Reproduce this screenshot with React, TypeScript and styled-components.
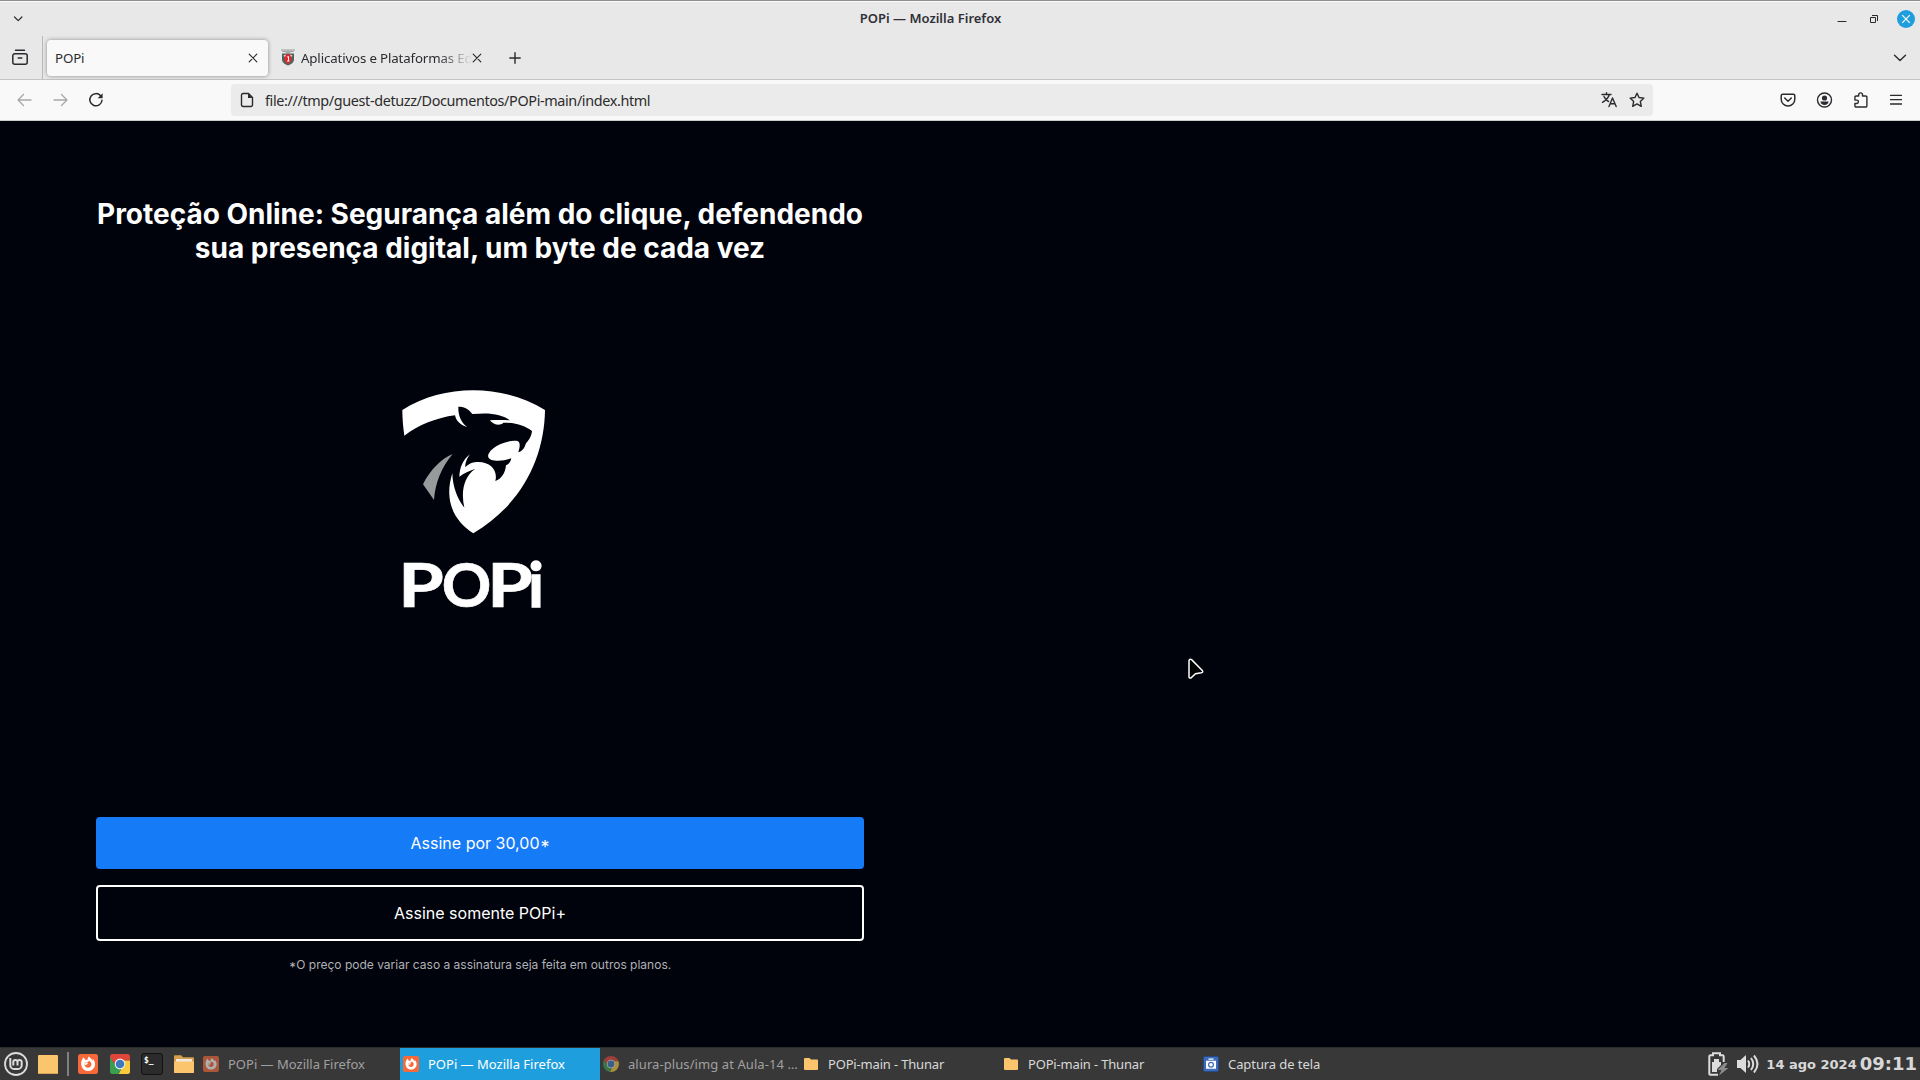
import React from "react";
import styled, { createGlobalStyle } from "styled-components";

const UI_FONT = '"Noto Sans", "Open Sans", sans-serif';

const GlobalStyle = createGlobalStyle`
  * { box-sizing: border-box; }
  html, body { margin: 0; padding: 0; background: #00030c; overflow: hidden; }
`;

const Desktop = styled.div`
  display: flex;
  flex-direction: column;
  width: 1920px;
  height: 1080px;
  font-family: ${UI_FONT};
  color: #2b2b2f;
`;

const Icon = styled.svg`
  display: block;
  flex: none;
  overflow: visible;
`;

const Label = styled.span<{ $spacing?: number }>`
  white-space: nowrap;
  letter-spacing: ${(p) => p.$spacing ?? 0}px;
`;

/* ---------- Window frame ---------- */

const TitleBar = styled.header`
  display: grid;
  grid-template-columns: 1fr auto 1fr;
  align-items: center;
  height: 36px;
  padding: 2px 5px 2px 12px;
  border-top: 1px solid #8e8e92;
  box-shadow: inset 0 1px 0 #fafafa;
  background: #e8e8e8;
`;

const WindowTitle = styled.h1`
  margin: 0 0 0 -66px;
  padding-bottom: 1px;
  font-size: 13px;
  line-height: 18px;
  font-weight: 600;
  color: #303036;
`;

const WindowButtons = styled.div`
  display: flex;
  justify-content: flex-end;
  align-items: center;
  gap: 14px;
`;

const Minimize = styled.div`
  margin-right: 4px;
`;

const TabStrip = styled.div`
  display: flex;
  align-items: center;
  height: 44px;
  border-bottom: 1px solid #c4c4c4;
  background: #e8e8e8;
`;

const RecentTabs = styled.div`
  display: flex;
  flex: none;
  align-items: center;
  align-self: stretch;
  width: 43px;
  padding-left: 12px;
  border-right: 1px solid #b8b8b8;
`;

const Tab = styled.div<{ $active?: boolean; $width: number }>`
  display: flex;
  flex: none;
  align-items: center;
  width: ${(p) => p.$width}px;
  height: 36px;
  margin-left: 4px;
  padding: 0 10px 0 ${(p) => (p.$active ? 6 : 9)}px;
  border-radius: 4px;
  font-size: 13.3px;
  background: ${(p) => (p.$active ? "#f9f9f9" : "transparent")};
  box-shadow: ${(p) => (p.$active ? "0 0 4px rgba(0, 0, 0, 0.4)" : "none")};
`;

const TabTitle = styled.span<{ $fade?: boolean }>`
  flex: 1;
  min-width: 0;
  margin-left: ${(p) => (p.$fade ? 6 : 2)}px;
  overflow: hidden;
  white-space: nowrap;
  letter-spacing: -0.15px;
  mask-image: ${(p) => (p.$fade ? "linear-gradient(to left, transparent, #000 34px)" : "none")};
`;

const NewTab = styled.div`
  margin-left: 17px;
  flex: 1;
`;

const AllTabs = styled.div`
  margin-right: 13px;
`;

const NavBar = styled.nav`
  display: flex;
  align-items: center;
  height: 41px;
  padding: 0 16px;
  border-bottom: 1px solid #cccccc;
  background: #f9f9f9;
`;

const NavButtons = styled.div`
  display: flex;
  flex: none;
  gap: 20px;
  width: 215px;
  padding-left: 1px;
`;

const AddressBar = styled.div`
  display: flex;
  flex: none;
  align-items: center;
  width: 1422px;
  height: 32px;
  padding: 0 8px 0 9px;
  border-radius: 4px;
  background: #ebebeb;
  font-size: 14.4px;
`;

const Address = styled.div`
  flex: 1;
  padding-left: 11px;
  color: #2c2c2c;
`;

const AddressActions = styled.div`
  display: flex;
  gap: 12px;
`;

const ToolbarActions = styled.div`
  display: flex;
  flex: 1;
  justify-content: flex-end;
  gap: 20px;
`;

/* ---------- Page ---------- */

const Page = styled.main`
  flex: 1;
  padding: 76px 96px 0;
  background: #00030c;
  color: #ffffff;
  font-family: Inter, sans-serif;
`;

const Column = styled.section`
  display: flex;
  flex-direction: column;
  width: 768px;
`;

const Headline = styled.h2`
  margin: 0 -10px;
  padding: 0 10px;
  font-size: 28px;
  line-height: 34px;
  font-weight: 700;
  letter-spacing: -0.01px;
  text-align: center;
`;

const Brand = styled.div`
  height: 437px;
  margin: 115px 0 0 294px;
`;

const PlanButton = styled.button<{ $outlined?: boolean }>`
  height: ${(p) => (p.$outlined ? 56 : 52)}px;
  margin-bottom: 16px;
  padding: 0;
  border: ${(p) => (p.$outlined ? "2px solid #ffffff" : "none")};
  border-radius: 4px;
  background: ${(p) => (p.$outlined ? "transparent" : "#167bf7")};
  color: #ffffff;
  font: 400 16px Inter, sans-serif;
`;

const Footnote = styled.p`
  margin: 0;
  font-size: 12px;
  line-height: 15px;
  text-align: center;
  color: #b0b1b4;
`;

const Asterisk = styled.span`
  display: inline-block;
  line-height: 1;
  padding: 0 0.06em;
  transform: translateY(0.2em) scale(1.12);
`;

/* ---------- Taskbar ---------- */

const Taskbar = styled.footer`
  display: flex;
  align-items: stretch;
  height: 33px;
  border-top: 1px solid #2c2c2c;
  background: #383838;
  color: #d8d8d8;
`;

const Launchers = styled.div`
  display: flex;
  flex: none;
  align-items: center;
  width: 200px;
  padding-left: 4px;
`;

const Launcher = styled.div<{ $gap: number }>`
  margin-left: ${(p) => p.$gap}px;
`;

const LauncherDivider = styled.div`
  width: 2px;
  height: 24px;
  margin-left: 9px;
  background: #808080;
`;

const TaskButton = styled.div<{ $active?: boolean; $dim?: boolean }>`
  display: flex;
  flex: none;
  align-items: center;
  gap: 9px;
  width: 200px;
  padding: 0 0 0 3px;
  background: ${(p) => (p.$active ? "#1f9ede" : "transparent")};
  color: ${(p) => (p.$active ? "#ffffff" : p.$dim ? "#a0a0a0" : "#d8d8d8")};
  font-size: 13px;

  svg { opacity: ${(p) => (p.$dim ? 0.6 : 1)}; }
`;

const Tray = styled.div`
  display: flex;
  flex: 1;
  align-items: center;
  justify-content: flex-end;
  padding-right: 3px;
  font-family: "DejaVu Sans", sans-serif;
  font-weight: 700;
`;

const TrayDate = styled.span`
  margin-left: 5px;
  font-size: 13px;
  white-space: nowrap;
`;

const TrayTime = styled.span`
  margin: 0 0 1px 3px;
  font-size: 18px;
`;

const Pointer = styled.svg`
  position: fixed;
  left: 1187px;
  top: 658px;
`;

/* ---------- Drawings ---------- */

type StrokeProps = { w: number; h: number; d: string; color?: string; weight?: number };

const Stroke = ({ w, h, d, color = "#2b2b2f", weight = 1.4 }: StrokeProps) => (
  <Icon width={w} height={h} viewBox={`0 0 ${w} ${h}`} fill="none" stroke={color} strokeWidth={weight} strokeLinecap="round" strokeLinejoin="round">
    <path d={d} />
  </Icon>
);

const CloseX = () => <Stroke w={10} h={10} d="M1.2 1.2 8.8 8.8M8.8 1.2 1.2 8.8" weight={1.2} />;

const Crest = () => (
  <Icon width="14" height="17" viewBox="0 0 14 17">
    <path d="M0 1h14M1.500 2.500h11" stroke="#999" strokeWidth="1" />
    <path d="M4 3 7 1l3 2-3 2z" fill="#aaa" />
    <path d="M1 4.500h12v6c0 3-3 5-6 6-3-1-6-3-6-6z" fill="#48685f" />
    <path d="M3.500 5.500h7v5c0 2-1.500 3.300-3.500 4.300-2-1-3.500-2.300-3.500-4.300z" fill="#e9232b" />
    <path d="M2.500 6.500 5 5.500 4 8zM11.500 6.500 9 5.500l1 2.500z" fill="#d9dfe0" />
    <path d="M6.200 8 7.500 7.500v4.500M6 12h2.500" stroke="#fff" fill="none" />
  </Icon>
);

const FirefoxIcon = ({ size }: { size: number }) => (
  <Icon width={size} height={size} viewBox="0 0 20 20">
    <rect width="20" height="20" rx="2.500" fill="#f8693a" />
    <path d="M6 3.200C3.600 5.200 3 7.800 3.200 10.500 3.600 14.300 6.500 17 10 17c4 0 7-3 7-6.800 0-2.500-1.200-4.500-2.600-5.600.4 1 .5 1.700.4 2.300C13.700 4.800 12 4.200 11 2.600c-1.200 1-1.500 2.300-1.300 3.400-.8-.3-1.400-.2-2 .1C6.600 5.300 6.200 4.400 6 3.200z" fill="#fff" />
    <path d="M7.500 8.600c1 .2 1.700.1 2.700-.7.300-.3.500-.7.300-1.100 1.800.4 3 1.800 2.900 3.600 0 1.900-1.500 3.300-3.400 3.300-2 0-3.500-1.500-3.500-3.300 0-.7.400-1.400 1-1.800z" fill="#f8693a" />
    <path d="M7 9.500c.8-.6 2-.4 3 0-.4.800-1.300 1.100-1.800 1.300-.4.500-1.200.4-1.700.2z" fill="#fff" />
  </Icon>
);

const ChromeIcon = ({ size, round }: { size: number; round?: boolean }) => (
  <Icon width={size} height={size} viewBox="0 0 20 20">
    <defs>
      <clipPath id={round ? "chromeRound" : "chromeSquare"}>
        <rect width="20" height="20" rx={round ? 10 : 2.5} />
      </clipPath>
    </defs>
    <g clipPath={`url(#${round ? "chromeRound" : "chromeSquare"})`}>
      <path d="M0 0h20v6.500H10L6 12 0 4z" fill="#e0453a" />
      <path d="M10 6.500h10V20H8.500L13 12z" fill="#f8ca3c" />
      <path d="M0 3l6 9.500 6 .5L8.500 20H0z" fill="#3a9e50" />
    </g>
    <circle cx="10" cy="10" r="5.400" fill="#f2f2f2" />
    <circle cx="10" cy="10" r="4.300" fill="#3e78bd" />
  </Icon>
);

const FolderIcon = ({ large }: { large?: boolean }) =>
  large ? (
    <Icon width="20" height="18" viewBox="0 0 20 18">
      <path d="M0 1.500C0 .7.500.3 1.200.3h6L9 2.300h10q1 0 1 1V17q0 1-1 1H1q-1 0-1-1z" fill="#d79e4d" />
      <path d="M2 4h16v3H2z" fill="#f0e8dd" />
      <path d="M0 6.500h20V17q0 1-1 1H1q-1 0-1-1z" fill="#fbc56d" />
    </Icon>
  ) : (
    <Icon width="16" height="14" viewBox="0 0 16 14">
      <path d="M1 2q0-1 1-1h4.500L8 2.500h6q1 0 1 1V12q0 1-1 1H2q-1 0-1-1z" fill="#fbc56d" />
    </Icon>
  );

const MintIcon = () => (
  <Icon width="24" height="24" viewBox="0 0 24 24" fill="none" stroke="#dcdcdc">
    <circle cx="12" cy="12" r="11" strokeWidth="1.800" />
    <path d="M6.300 6v7.200a3.800 3.800 0 0 0 3.800 3.800h3.800a3.800 3.800 0 0 0 3.800-3.800V10a2.100 2.100 0 0 0-4.200 0v3.500M13.500 10a2.100 2.100 0 0 0-4.200 0v3.500" strokeWidth="2" />
  </Icon>
);

const CameraIcon = () => (
  <Icon width="16" height="16" viewBox="0 0 16 16">
    <rect x=".5" y=".5" width="15" height="15" rx="1.500" fill="#3c6cb8" stroke="#254a85" />
    <path d="M5.500 2.500h5v1.300h-5zM3 4.800h10v8H3z" fill="#fff" />
    <circle cx="8" cy="8.800" r="2.400" fill="#fff" stroke="#3c6cb8" strokeWidth="1.200" />
  </Icon>
);

const BrandLogo = () => (
  <Icon width="170" height="240" viewBox="0 0 510 720">
    <path
      fill="#fff"
      d="M37 90C100 50 175 31 250 31s150 19 215 59c-2 140-65 280-215 370C195 425 160 365 187 280c1 42 16 78 36 103-11-48-1-93 32-116-17 5-33 13-47 23 1-27 10-50 32-67-12 17-14 27-14 39 12-13 24-16 39-16 38 0 59 26 51 57 19-6 30-25 32-47 8-4 14-10 16-21-19 7-44 10-61 4-18-7-6-27 17-41 25-14 52-18 64-14 9 6 4 21 1 33 13-4 19-14 23-27 10-12 16-20 18-37-21-15-46-25-86-25-5 6-15 7-24 5-6-3-13-7-16-12 20-2 40-1 60 0C335 102 300 97 247 102 235 85 220 80 205 80c-1 25 8 48 27 61-20-4-34-19-37-35C140 113 85 135 43 167 39 140 37 115 37 90z"
    />
    <path fill="#98999b" d="M188 222c-33 13-68 48-89 91l33 47c3-50 23-100 56-138z" />
    <g fill="#fff" stroke="#fff" strokeWidth="2" fontFamily="Lato, sans-serif" fontSize="184" fontWeight="700">
      <text transform="translate(25 680) scale(1.2 1)">P</text>
      <text x="155" y="680">O</text>
      <text transform="translate(292 680) scale(1.2 1)">P</text>
      <text x="415" y="680" strokeWidth="4">i</text>
    </g>
  </Icon>
);

const TASKS = [
  { title: "POPi — Mozilla Firefox", icon: <FirefoxIcon size={16} />, dim: true },
  { title: "POPi — Mozilla Firefox", icon: <FirefoxIcon size={16} />, active: true },
  { title: "alura-plus/img at Aula-14 …", icon: <ChromeIcon size={16} round />, dim: true, spacing: 0.08 },
  { title: "POPi-main - Thunar", icon: <FolderIcon />, spacing: -0.17 },
  { title: "POPi-main - Thunar", icon: <FolderIcon />, spacing: -0.17 },
  { title: "Captura de tela", icon: <CameraIcon />, spacing: -0.08 },
];

export default function App() {
  return (
    <Desktop>
      <GlobalStyle />
      <TitleBar>
        <Stroke w={12} h={6} d="M2.500 1 6.200 4.600 9.900 1" weight={1.2} />
        <WindowTitle>
          <Label>POPi — Mozilla Firefox</Label>
        </WindowTitle>
        <WindowButtons>
          <Minimize>
            <Stroke w={10} h={10} d="M1 7.500h8" weight={1.1} />
          </Minimize>
          <Icon width="18" height="10" viewBox="0 0 18 10" fill="none" stroke="#2b2b2f">
            <path d="M5.500 3.500h5v5h-5zM7 1.500h5.500V7" />
          </Icon>
          <Icon width="18" height="18" viewBox="0 0 18 18">
            <circle cx="9" cy="9" r="9" fill="#1f9ede" />
            <path d="m5.200 5.200 7.600 7.600m0-7.600-7.600 7.600" stroke="#fff" strokeWidth="1.200" />
          </Icon>
        </WindowButtons>
      </TitleBar>

      <TabStrip>
        <RecentTabs>
          <Stroke w={16} h={17} d="M3.500 1.200h9M2.800 4.700h10.400a2 2 0 0 1 2 2v6.600a2 2 0 0 1-2 2H2.800a2 2 0 0 1-2-2V6.700a2 2 0 0 1 2-2zM6.200 9h3.600" weight={1.5} />
        </RecentTabs>
        <Tab $active $width={221}>
          <TabTitle>POPi</TabTitle>
          <CloseX />
        </Tab>
        <Tab $width={220}>
          <Crest />
          <TabTitle $fade>Aplicativos e Plataformas Ed</TabTitle>
          <CloseX />
        </Tab>
        <NewTab>
          <Stroke w={12} h={12} d="M6 .8v10.400M.8 6h10.400" />
        </NewTab>
        <AllTabs>
          <Stroke w={14} h={8} d="M1.500 1.200 7 6.500l5.500-5.300" />
        </AllTabs>
      </TabStrip>

      <NavBar>
        <NavButtons>
          <Stroke w={16} h={14} d="M14 7H1m5.500-5.500L1 7l5.500 5.500" color="#a8a8a8" weight={1.3} />
          <Stroke w={16} h={14} d="M1 7h13M8.500 1.500 14 7l-5.500 5.500" color="#a8a8a8" weight={1.3} />
          <Icon width="14" height="14" viewBox="0 0 14 14">
            <path d="M11.600 2.800A6.100 6.100 0 1 0 13 7.300" fill="none" stroke="#2b2b2f" strokeWidth="1.500" strokeLinecap="round" />
            <path d="M13.600.3v5H8.600z" fill="#2b2b2f" />
          </Icon>
        </NavButtons>
        <AddressBar>
          <Icon width="14" height="16" viewBox="0 0 14 16">
            <path d="M3 1.500h5.500l4 4V13a1.500 1.500 0 0 1-1.500 1.500H3A1.500 1.500 0 0 1 1.500 13V3A1.500 1.500 0 0 1 3 1.500z" fill="none" stroke="#2b2b2f" strokeWidth="1.400" />
            <path d="M8 1.500V6h4.500z" fill="#2b2b2f" />
          </Icon>
          <Address>
            <Label $spacing={-0.37}>file:///tmp/guest-detuzz/Documentos/POPi-main/index.html</Label>
          </Address>
          <AddressActions>
            <Stroke w={16} h={16} d="M1 2.500h9M5.500.8v1.700M8.300 2.500C7.500 6 4.500 8.500 1.500 10.300M3 4.500c1 2.500 2.500 4 4.500 5M8 14.500l3.500-8.500 3.700 8.500M9.300 11.700H14" weight={1.4} />
            <Stroke w={16} h={16} d="M8 1.200l2 4.300 4.900.6-3.600 3.300 1 4.900L8 11.900l-4.300 2.400 1-4.900L1.100 6.100 6 5.500z" />
          </AddressActions>
        </AddressBar>
        <ToolbarActions>
          <Stroke w={16} h={16} d="M2.700 2.200h10.600a1.500 1.500 0 0 1 1.500 1.500v3.500a6.800 6.800 0 0 1-13.600 0V3.700a1.500 1.500 0 0 1 1.500-1.500zM4.700 6 8 9.200 11.300 6" weight={1.5} />
          <Icon width="16" height="16" viewBox="0 0 16 16">
            <circle cx="8.500" cy="8" r="7" fill="none" stroke="#2b2b2f" strokeWidth="1.400" />
            <circle cx="8.500" cy="6" r="2.600" fill="#2b2b2f" />
            <path d="M4.500 9.500h8c0 2-1.800 3.500-4 3.500s-4-1.500-4-3.500z" fill="#2b2b2f" />
          </Icon>
          <Stroke w={16} h={16} d="M6.700 4V2.800a1.900 1.900 0 0 1 3.800 0V4h3.200a1.200 1.200 0 0 1 1.200 1.200v8.600a1.200 1.200 0 0 1-1.200 1.200H4.100a1.200 1.200 0 0 1-1.200-1.200V11.500h1.800a1.700 1.700 0 0 0 0-3.400H2.900V5.200A1.200 1.200 0 0 1 4.100 4z" />
          <Stroke w={16} h={16} d="M2.500 3.300h11M2.500 7.700h11M2.500 12h11" weight={1.3} />
        </ToolbarActions>
      </NavBar>

      <Page>
        <Column>
          <Headline>Proteção Online: Segurança além do clique, defendendo sua presença digital, um byte de cada vez</Headline>
          <Brand>
            <BrandLogo />
          </Brand>
          <PlanButton>
            Assine por 30,00<Asterisk>*</Asterisk>
          </PlanButton>
          <PlanButton $outlined>Assine somente POPi+</PlanButton>
          <Footnote>
            <Asterisk>*</Asterisk>O preço pode variar caso a assinatura seja feita em outros planos.
          </Footnote>
        </Column>
      </Page>

      <Taskbar>
        <Launchers>
          <MintIcon />
          <Launcher $gap={10}>
            <Icon width="20" height="19" viewBox="0 0 20 19">
              <rect width="20" height="19" rx="1" fill="#fbc56d" />
              <path d="M1 18.500h18" stroke="#d7a452" />
            </Icon>
          </Launcher>
          <LauncherDivider />
          <Launcher $gap={9}><FirefoxIcon size={20} /></Launcher>
          <Launcher $gap={12}><ChromeIcon size={20} /></Launcher>
          <Launcher $gap={11}>
            <Icon width="22" height="22" viewBox="0 0 22 22">
              <rect x=".5" y=".5" width="21" height="21" rx="2.500" fill="#2b2b2b" stroke="#121212" />
              <text x="3" y="10" fill="#fff" fontFamily="DejaVu Sans Mono, monospace" fontWeight="700" fontSize="8">$_</text>
            </Icon>
          </Launcher>
          <Launcher $gap={11}><FolderIcon large /></Launcher>
        </Launchers>
        {TASKS.map((task, i) => (
          <TaskButton key={i} $active={task.active} $dim={task.dim}>
            {task.icon}
            <Label $spacing={task.spacing}>{task.title}</Label>
          </TaskButton>
        ))}
        <Tray>
          <Icon width="21" height="24" viewBox="0 0 21 24">
            <path d="M1.300 22.700V4.500q0-1.200 1.200-1.200H5V1.300h7v2h2.500q1.200 0 1.200 1.200V10M1.300 22.700H10" fill="none" stroke="#dcdcdc" strokeWidth="2" />
            <path d="M4 10h2V7h5v3h2v3l-4 4v3H4z" fill="#dcdcdc" />
            <path d="M16.500 11 9.500 18h4L11 23.500l9.500-7.500h-4l3-5z" fill="#8c8c8c" />
          </Icon>
          <Icon width="32" height="22" viewBox="0 0 32 22">
            <path d="M8 7h3.500L17 2v18l-5.500-5H8z" fill="#dcdcdc" />
            <path d="M19 7.500q2.500 3.500 0 7M22 5q4.500 6 0 12M25 2.500q7 8.500 0 17" fill="none" stroke="#dcdcdc" strokeWidth="2" />
          </Icon>
          <TrayDate>14 ago 2024</TrayDate>
          <TrayTime>09:11</TrayTime>
        </Tray>
      </Taskbar>

      <Pointer width="18" height="22" viewBox="0 0 18 22">
        <path d="M2 3.200v15.600q.2 1.600 1.900 1.200L8.500 15.800l5.800-1q2.200-.6 1-2.300L4.600 1.700Q2.300.4 2 3.200z" fill="#000" stroke="#fff" strokeWidth="1.500" />
      </Pointer>
    </Desktop>
  );
}
